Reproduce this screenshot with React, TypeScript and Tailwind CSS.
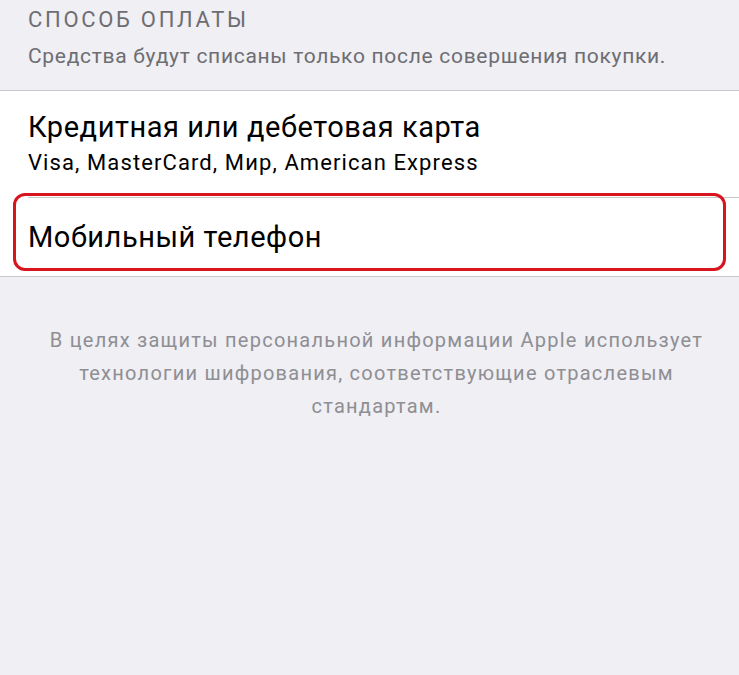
export default function App() {
  return (
    <div className="min-h-screen w-full bg-[#efeff4] font-['Roboto',sans-serif] overflow-hidden">
      {/* Section header */}
      <div className="pl-[28px] pt-[4px] pb-[14px]">
        <div className="text-[22px] leading-[32px] tracking-[2.7px] text-[#6d6d72] uppercase">Способ оплаты</div>
        <div className="text-[21px] leading-[40px] tracking-[0.7px] text-[#6d6d72]">Средства будут списаны только после совершения покупки.</div>
      </div>

      {/* Options */}
      <div className="relative bg-white border-y border-[#c8c7cc]">
        <div className="pl-[28px] pt-[19px] pb-[16px]">
          <div className="text-[29px] leading-[34px] tracking-[0.55px] text-black">Кредитная или дебетовая карта</div>
          <div className="text-[22px] leading-[37px] tracking-[1.1px] text-black">Visa, MasterCard, Мир, American Express</div>
        </div>
        <div className="ml-[28px] h-px bg-[#c8c7cc]" />
        <div className="pl-[28px] h-[78px] flex items-center">
          <div className="text-[29px] leading-[34px] tracking-[0.55px] text-black">Мобильный телефон</div>
        </div>
        {/* annotation */}
        <div className="absolute left-[13px] right-[13px] top-[102px] bottom-[5px] rounded-[12px] border-[3px] border-[#d8141e] pointer-events-none" />
      </div>

      {/* Footer */}
      <div className="pl-[44px] pr-[30px] pt-[47px] text-center text-[20px] leading-[33px] tracking-[1.25px] text-[#8e8e93]">
        В целях защиты персональной информации Apple использует технологии шифрования, соответствующие отраслевым стандартам.
      </div>
    </div>
  );
}
